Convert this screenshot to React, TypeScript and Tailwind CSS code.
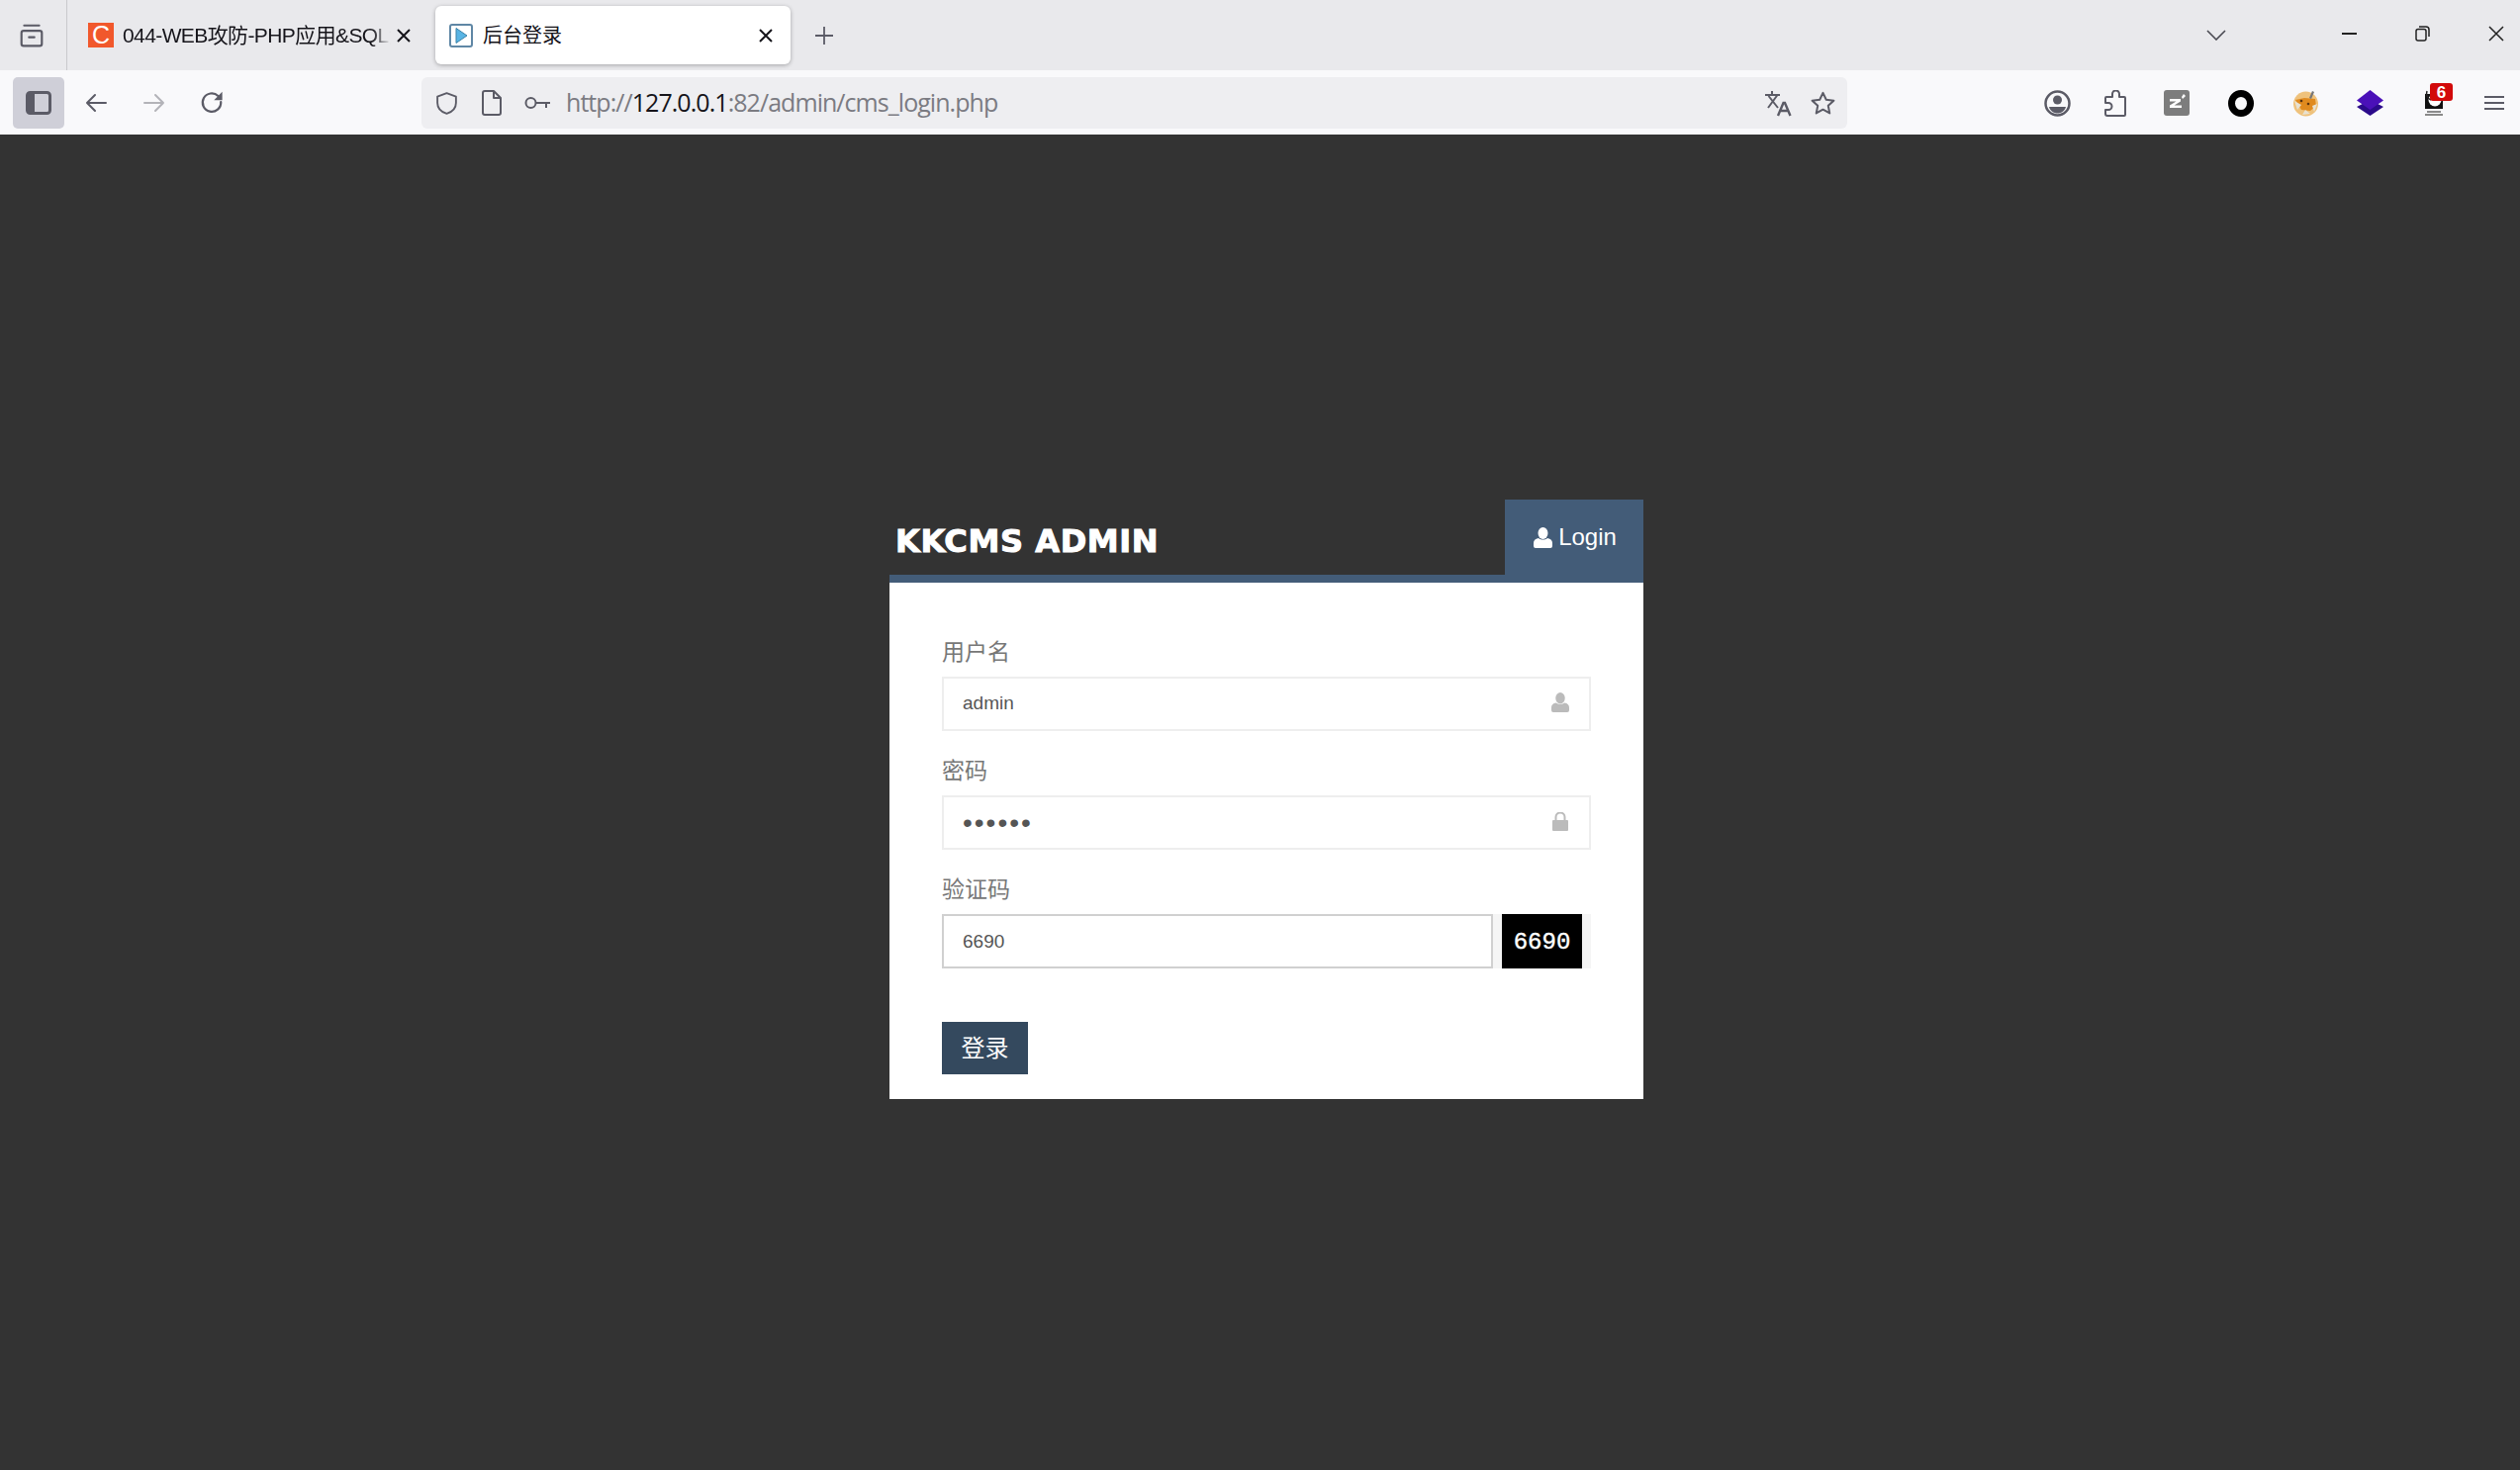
import React from "react";

const Ic = ({ w = 26, h = 26, vb = "0 0 24 24", c = "#5b5b66", sw = 2, children }: { w?: number; h?: number; vb?: string; c?: string; sw?: number; children: React.ReactNode }) => (
  <svg width={w} height={h} viewBox={vb} fill="none" stroke={c} strokeWidth={sw} strokeLinecap="round" strokeLinejoin="round" className="shrink-0">
    {children}
  </svg>
);

const Box = ({ w, children, className = "" }: { w: string; children: React.ReactNode; className?: string }) => (
  <div className={`flex shrink-0 items-center justify-center ${w} ${className}`}>{children}</div>
);

const UserGlyph = ({ c, w, h }: { c: string; w: number; h: number }) => (
  <svg width={w} height={h} viewBox="0 0 19 21" className="shrink-0">
    <ellipse cx="9.5" cy="6" rx="5" ry="6" fill={c} />
    <path d="M0 19v-3c0-2.500 1.500-4.500 5-5 1.200 1 2.800 1.500 4.500 1.500s3.300-.5 4.500-1.500c3.500.5 5 2.500 5 5v3a2 2 0 0 1-2 2H2a2 2 0 0 1-2-2z" fill={c} />
  </svg>
);

const Field = ({ label, children }: { label: string; children: React.ReactNode }) => (
  <div className="flex flex-col">
    <label className="flex h-[46px] items-center pb-[4px] text-[23px] leading-none text-[#777]">{label}</label>
    {children}
  </div>
);

export default function App() {
  return (
    <div className="flex min-h-screen flex-col bg-[#333] font-['Liberation_Sans','Noto_Sans_CJK_SC',sans-serif]">
      {/* tab strip */}
      <div className="flex h-[71px] items-center bg-[#e9e9ec] text-[#15141a]">
        <Box w="w-[68px]" className="h-full border-r border-[#c9c9cd] pr-[4px]">
          <Ic w={26} h={27}>
            <rect x="2.500" y="8" width="19" height="14" rx="2" />
            <path d="M5 3h14M9.500 14h5" />
          </Ic>
        </Box>
        <div className="flex h-full w-[372px] shrink-0 items-center pl-[21px]">
          <div className="flex h-[25px] w-[26px] shrink-0 items-center justify-center bg-[#f1582c] text-[25px] leading-none text-white">C</div>
          <span className="ml-[9px] w-[271px] overflow-hidden whitespace-nowrap pt-[1px] text-[21px] tracking-[-0.6px] [mask-image:linear-gradient(to_right,black_93%,transparent)]">044-WEB攻防-PHP应用&amp;SQL注入</span>
          <svg width="14" height="14" viewBox="0 0 14 14" stroke="#15141a" strokeWidth="2" className="ml-[6px] shrink-0"><path d="M1 1l12 12M13 1L1 13" /></svg>
        </div>
        <div className="flex h-[59px] w-[359px] shrink-0 items-center rounded-[6px] bg-white pl-[14px] shadow-[0_1px_4px_rgba(0,0,0,0.3)]">
          <svg width="24" height="24" viewBox="0 0 24 24" className="shrink-0">
            <rect x="1" y="1" width="22" height="22" rx="2" fill="#fff" stroke="#5f87a5" strokeWidth="2" />
            <path d="M7 4.500l11 7.500-11 7.500z" fill="#58b4e4" stroke="#3b82a8" strokeWidth="1" />
          </svg>
          <span className="ml-[10px] pt-[1px] text-[20px]">后台登录</span>
          <svg width="14" height="14" viewBox="0 0 14 14" stroke="#15141a" strokeWidth="2" className="ml-[199px] shrink-0"><path d="M1 1l12 12M13 1L1 13" /></svg>
        </div>
        <svg width="20" height="20" viewBox="0 0 20 20" stroke="#5b5b66" strokeWidth="1.800" className="ml-[24px] shrink-0"><path d="M10 1v18M1 10h18" /></svg>
        <div className="flex-1" />
        <svg width="20" height="11" viewBox="0 0 20 11" fill="none" stroke="#4a4a52" strokeWidth="1.600" className="mr-[117px] shrink-0"><path d="M1 1l9 9 9-9" /></svg>
        <div className="mr-[59px] h-[2px] w-[15px] shrink-0 -translate-y-[2px] bg-[#222]" />
        <svg width="15" height="16" viewBox="0 0 15 16" fill="none" stroke="#222" strokeWidth="1.500" className="mr-[59px] shrink-0 -translate-y-[2px]"><rect x="1" y="3.500" width="10" height="11.500" rx="2" /><path d="M4 1h7a3 3 0 0 1 3 3v7" /></svg>
        <svg width="16" height="16" viewBox="0 0 16 16" stroke="#222" strokeWidth="1.500" className="mr-[16px] shrink-0 -translate-y-[2px]"><path d="M1 1l14 14M15 1L1 15" /></svg>
      </div>

      {/* toolbar */}
      <div className="flex h-[65px] items-start bg-[#f9f9fb] pl-[13px] pt-[7px]">
        <div className="flex h-[52px] w-[52px] shrink-0 items-center justify-center rounded-[5px] bg-[#cfcfd8]">
          <svg width="26" height="24" viewBox="0 0 26 24" fill="none"><rect x="1.500" y="1.500" width="23" height="21" rx="3" stroke="#5b5b66" strokeWidth="3" /><rect x="3" y="3" width="6" height="18" fill="#5b5b66" /></svg>
        </div>
        <div className="flex h-[52px] items-center">
          <Box w="w-[24px]" className="ml-[20px]"><Ic w={24} h={24}><path d="M22 12H3M11 4l-8 8 8 8" /></Ic></Box>
          <Box w="w-[24px]" className="ml-[35px]"><Ic w={24} h={24} c="#b3b3b8"><path d="M2 12h19M13 4l8 8-8 8" /></Ic></Box>
          <Box w="w-[24px]" className="ml-[34px]">
            <svg width="26" height="26" viewBox="0 0 26 26" fill="none" className="-translate-y-[1px]">
              <path d="M20 6.500A10 10 0 1 0 23 13" stroke="#5b5b66" strokeWidth="2.400" strokeLinecap="round" />
              <path d="M24.500 2v9h-9z" fill="#5b5b66" />
            </svg>
          </Box>
        </div>
        <div className="ml-[200px] flex h-[52px] w-[1441px] shrink-0 items-center rounded-[6px] bg-[#eeeef1] pl-[13px]">
          <Ic w={25} h={27} sw={1.800}><path d="M12 2l9 3.400v6.100c0 5.200-3.600 8.800-9 10.500-5.400-1.700-9-5.300-9-10.500V5.400z" /></Ic>
          <svg width="20" height="26" viewBox="0 0 20 26" fill="none" stroke="#5b5b66" strokeWidth="2" strokeLinejoin="round" className="ml-[23px] shrink-0"><path d="M3 1h9l7 7v15a2 2 0 0 1-2 2H3a2 2 0 0 1-2-2V3a2 2 0 0 1 2-2zM12 1v7h7" /></svg>
          <svg width="27" height="14" viewBox="0 0 27 14" fill="none" stroke="#5b5b66" strokeWidth="2" className="ml-[23px] shrink-0"><circle cx="6.500" cy="7" r="5" /><path d="M11.500 7H26M22 7v5" /></svg>
          <div className="ml-[15px] flex-1 whitespace-nowrap font-['Open_Sans','Liberation_Sans',sans-serif] text-[25px] tracking-[-0.95px] text-[#7b7b82]">
            http://<span className="text-[#15141a]">127.0.0.1</span>:82/admin/cms_login.php
          </div>
          <svg width="28" height="27" viewBox="0 0 28 27" fill="none" stroke="#5b5b66" strokeWidth="2" className="shrink-0">
            <path d="M1 5h15M8 1v4M13.500 5L4 18M4.500 6L14 18" />
            <path d="M14 26l5.500-13h1.500l5.500 13M16.500 21h8" strokeWidth="2.400" />
          </svg>
          <div className="ml-[18px] mr-[11px]"><Ic w={27} h={27} sw={1.800}><path d="M12 2.500l2.900 6.200 6.800.8-5 4.600 1.300 6.700-6-3.300-6 3.300 1.300-6.700-5-4.600 6.800-.8z" /></Ic></div>
        </div>
        <div className="flex h-[52px] items-center">
          <Box w="w-[28px]" className="ml-[198px]">
            <svg width="27" height="27" viewBox="0 0 27 27" fill="none"><circle cx="13.500" cy="13.500" r="12" stroke="#5b5b66" strokeWidth="2.500" /><circle cx="13.500" cy="10" r="4.500" fill="#5b5b66" /><path d="M5 17h17c-1 4-4.500 6.500-8.500 6.500S6 21 5 17z" fill="#5b5b66" /></svg>
          </Box>
          <Box w="w-[22px]" className="ml-[34px]">
            <svg width="22" height="27" viewBox="0 0 22 27" fill="none" stroke="#5b5b66" strokeWidth="2" strokeLinejoin="round"><path d="M8 7V4a3.500 3.500 0 0 1 7 0v3h5a1 1 0 0 1 1 1v17a1 1 0 0 1-1 1H3a2 2 0 0 1-2-2v-4h3a3 3 0 0 0 0-7H1v-5a1 1 0 0 1 1-1z" /></svg>
          </Box>
          <Box w="w-[26px]" className="ml-[38px]">
            <svg width="26" height="26" viewBox="0 0 26 26"><rect width="26" height="26" rx="3" fill="#7d7d7d" /><path d="M6 9h11v2.500l-6.500 4H18V18H6v-2.500l6.500-4H6z" fill="#fff" /><path d="M20 4l2 2-3 3-1-2z" fill="#fff" /></svg>
          </Box>
          <Box w="w-[26px]" className="ml-[39px]">
            <svg width="26" height="27" viewBox="0 0 26 27" fill="none"><ellipse cx="13" cy="13.500" rx="9.500" ry="10" stroke="#000" strokeWidth="7" /></svg>
          </Box>
          <Box w="w-[27px]" className="ml-[39px]">
            <svg width="27" height="27" viewBox="0 0 27 27">
              <circle cx="13.500" cy="14" r="12.500" fill="#efc27c" />
              <path d="M3 10l9-2 11 1 1 7-6 5-9-1z" fill="#e08a1e" />
              <path d="M2 11l7 4-4 5zM25 14l-5 2 2 6zM10 25l3-5 5 4z" fill="#e8e2d2" />
              <path d="M17 8l3-7 2 1-3 7z" fill="#777" />
              <circle cx="9" cy="11" r="1.300" fill="#5a3410" />
              <circle cx="16" cy="14" r="1.300" fill="#5a3410" />
            </svg>
          </Box>
          <Box w="w-[27px]" className="ml-[38px]">
            <svg width="27" height="26" viewBox="0 0 27 26"><path d="M13.500 10L27 17 13.500 26 0 17z" fill="#2b0a8a" /><path d="M13.500 0L27 10.500 13.500 20 0 10.500z" fill="#4a10b8" /></svg>
          </Box>
          <div className="relative ml-[41px] flex h-[26px] w-[20px] shrink-0 items-center justify-center">
            <svg width="20" height="26" viewBox="0 0 20 26">
              <rect x="1" y="4" width="18" height="15" fill="#111" />
              <circle cx="11" cy="10" r="6.500" fill="#fff" />
              <path d="M3 1c-1.500 4 1 8 4 9" fill="none" stroke="#222" strokeWidth="1.500" />
              <path d="M3 22h14M1 25h18" stroke="#666" strokeWidth="1.500" />
            </svg>
            <span className="absolute -right-[9px] -top-[7px] flex h-[18px] w-[23px] items-center justify-center rounded-[3px] bg-[#d20a0a] text-[17px] font-bold leading-none text-white">6</span>
          </div>
          <svg width="20" height="16" viewBox="0 0 20 16" stroke="#5b5b66" strokeWidth="2" className="ml-[41px] shrink-0"><path d="M0 2h20M0 8h20M0 14h20" /></svg>
        </div>
      </div>

      {/* page */}
      <div className="flex flex-1 justify-center pb-[375px] pl-[13px] pt-[369px]">
        <div className="flex w-[762px] shrink-0 flex-col">
          <div className="flex h-[84px] items-stretch border-b-[8px] border-[#435c78]">
            <div className="flex flex-1 items-center pl-[6px] pt-[8px]">
              <span className="font-['DejaVu_Sans',sans-serif] text-[32px] font-bold leading-none tracking-[0.6px] text-white [-webkit-text-stroke:1px_white]">KKCMS ADMIN</span>
            </div>
            <div className="flex w-[140px] shrink-0 items-center justify-center gap-[6px] bg-[#435c78] pl-[2px] text-[24px] text-white">
              <UserGlyph c="#fff" w={19} h={21} />
              Login
            </div>
          </div>
          <div className="flex h-[522px] flex-col bg-white px-[53px] pt-[49px]">
            <Field label="用户名">
              <div className="flex h-[55px] items-center border-2 border-[#eee] pl-[19px] pr-[20px]">
                <input readOnly value="admin" className="min-w-0 flex-1 bg-transparent text-[19px] text-[#555] outline-none" />
                <div className="mb-[3px]"><UserGlyph c="#bbb" w={18} h={20} /></div>
              </div>
            </Field>
            <div className="h-[19px]" />
            <Field label="密码">
              <div className="flex h-[55px] items-center border-2 border-[#eee] pl-[19px] pr-[20px]">
                <input readOnly type="password" value="123456" className="min-w-0 flex-1 bg-transparent text-[28px] tracking-[2px] text-[#555] outline-none" />
                <svg width="16" height="19" viewBox="0 0 16 19" className="mx-[1px] mb-[3px] shrink-0"><rect y="8" width="16" height="11" rx="1" fill="#bbb" /><path d="M3.500 8V5a4.500 4.500 0 0 1 9 0v3" fill="none" stroke="#bbb" strokeWidth="2" /></svg>
              </div>
            </Field>
            <div className="h-[19px]" />
            <Field label="验证码">
              <div className="flex h-[55px] bg-[#f5f5f5]">
                <input readOnly value="6690" className="h-full w-[557px] shrink-0 border-2 border-[#d0d0d0] bg-white pl-[19px] text-[19px] text-[#555] outline-none" />
                <div className="ml-[9px] flex h-full w-[81px] shrink-0 items-center justify-center bg-black pt-[2px] font-['Liberation_Mono',monospace] text-[24px] leading-none text-white [-webkit-text-stroke:0.4px_white]">6690</div>
              </div>
            </Field>
            <button className="mt-[54px] flex h-[53px] w-[87px] items-center justify-center bg-[#34495e] text-[24px] text-white">登录</button>
          </div>
        </div>
      </div>
    </div>
  );
}
